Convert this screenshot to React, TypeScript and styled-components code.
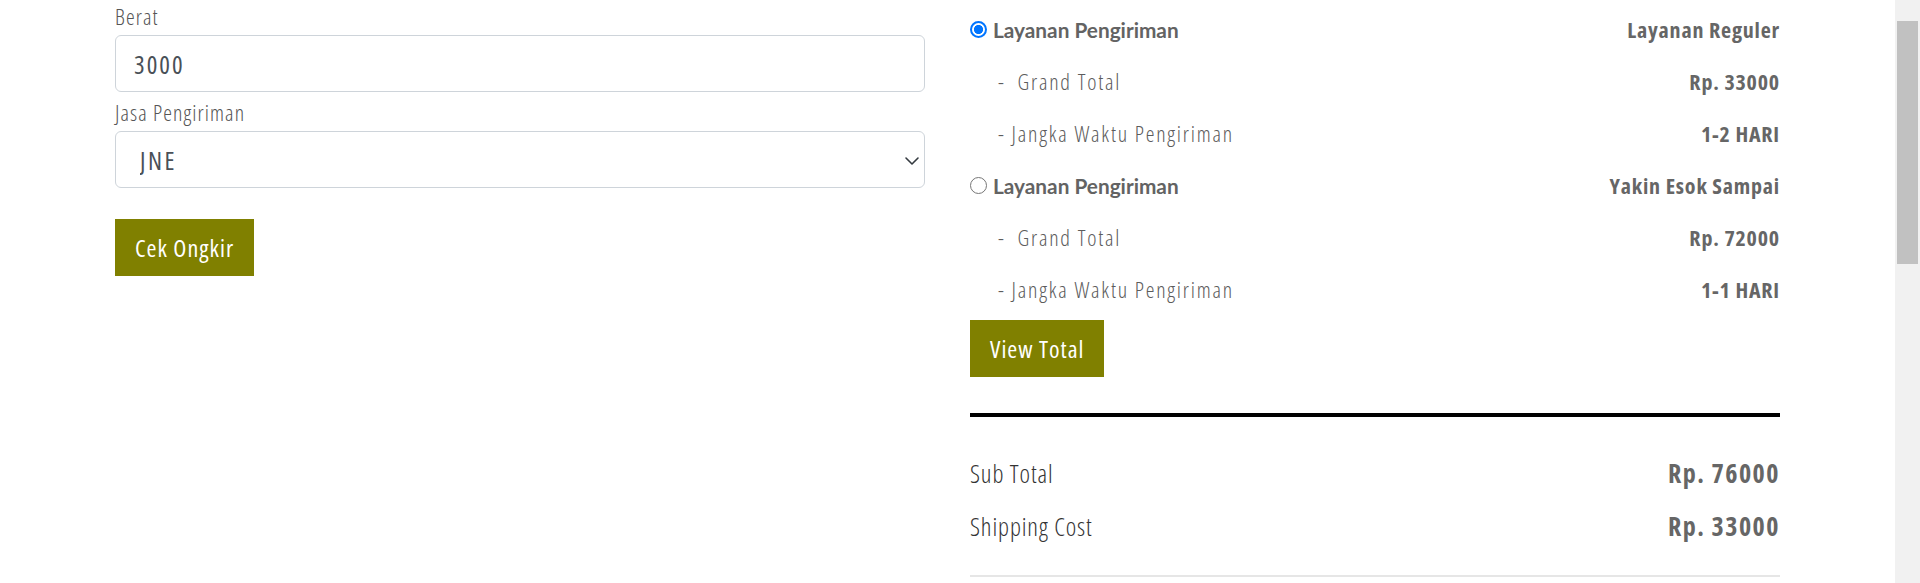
import React, { useState } from 'react';
import styled, { createGlobalStyle } from 'styled-components';

const GlobalStyle = createGlobalStyle`
  html, body {
    margin: 0;
    padding: 0;
    background: #ffffff;
    overflow: hidden;
  }
  * {
    box-sizing: border-box;
  }
`;

interface serviceItem {
  id: string;
  name: string;
  total: string;
  eta: string;
}

const services: Array<serviceItem> = [
  { id: 'reg', name: 'Layanan Reguler', total: 'Rp. 33000', eta: '1-2 HARI' },
  { id: 'yes', name: 'Yakin Esok Sampai', total: 'Rp. 72000', eta: '1-1 HARI' },
];

const summary = [
  { label: 'Sub Total', value: 'Rp. 76000' },
  { label: 'Shipping Cost', value: 'Rp. 33000' },
];

export default function App() {
  const [selected, setSelected] = useState('reg');
  const [weight, setWeight] = useState('3000');

  return (
    <Page>
      <GlobalStyle />
      <Content>
        <FormColumn>
          <FieldLabel htmlFor="berat">Berat</FieldLabel>
          <TextInput
            id="berat"
            value={weight}
            onChange={(e) => setWeight(e.target.value)}
          />
          <FieldLabel htmlFor="kurir">Jasa Pengiriman</FieldLabel>
          <SelectWrap>
            <Select id="kurir" defaultValue="jne">
              <option value="jne">JNE</option>
              <option value="pos">POS</option>
              <option value="tiki">TIKI</option>
            </Select>
            <Chevron viewBox="0 0 16 16" aria-hidden="true">
              <path
                d="M2 5l6 6 6-6"
                fill="none"
                stroke="#343a40"
                strokeWidth="1.6"
                strokeLinecap="round"
                strokeLinejoin="round"
              />
            </Chevron>
          </SelectWrap>
          <OliveButton $top={31}>Cek Ongkir</OliveButton>
        </FormColumn>

        <SummaryColumn>
          {services.map((s) => (
            <div key={s.id}>
              <Row>
                <ServiceHead onClick={() => setSelected(s.id)}>
                  <Radio $checked={selected === s.id} />
                  <ServiceTitle>Layanan Pengiriman</ServiceTitle>
                </ServiceHead>
                <Value>{s.name}</Value>
              </Row>
              <Row>
                <SubLabel>-{'\u00a0\u00a0'}Grand Total</SubLabel>
                <Value>{s.total}</Value>
              </Row>
              <Row>
                <SubLabel>- Jangka Waktu Pengiriman</SubLabel>
                <Value>{s.eta}</Value>
              </Row>
            </div>
          ))}
          <OliveButton $top={5}>View Total</OliveButton>
          <ThickRule />
          <SummaryList>
            {summary.map((item) => (
              <SummaryRow key={item.label}>
                <SummaryLabel>{item.label}</SummaryLabel>
                <SummaryValue>{item.value}</SummaryValue>
              </SummaryRow>
            ))}
          </SummaryList>
          <ThinRule />
        </SummaryColumn>
      </Content>

      <ScrollTrack>
        <ScrollThumb />
      </ScrollTrack>
    </Page>
  );
}

const Page = styled.div`
  width: 1920px;
  height: 583px;
  background: #ffffff;
`;

const Content = styled.div`
  display: grid;
  grid-template-columns: 810px 810px;
  column-gap: 45px;
  padding-left: 115px;
`;

const FormColumn = styled.div`
  display: flex;
  flex-direction: column;
  align-items: flex-start;
  padding-top: 1px;
`;

const FieldLabel = styled.label`
  display: block;
  font-family: 'Open Sans', sans-serif;
  font-stretch: 87.5%;
  font-weight: 300;
  font-size: 22px;
  letter-spacing: 1.1px;
  line-height: 30px;
  color: #555555;
  margin-bottom: 4px;
`;

const TextInput = styled.input`
  width: 100%;
  height: 57px;
  margin: 0 0 5px;
  padding: 0 18px;
  border: 1px solid #ced4da;
  border-radius: 6px;
  background: #ffffff;
  font-family: 'Open Sans', sans-serif;
  font-stretch: 87.5%;
  font-weight: 400;
  font-size: 25px;
  letter-spacing: 2px;
  color: #495057;
  outline: none;
`;

const SelectWrap = styled.div`
  position: relative;
  width: 100%;
`;

const Select = styled.select`
  display: block;
  width: 100%;
  height: 57px;
  padding: 0 40px 0 24px;
  border: 1px solid #ced4da;
  border-radius: 6px;
  background: #ffffff;
  appearance: none;
  font-family: 'Open Sans', sans-serif;
  font-stretch: 87.5%;
  font-weight: 400;
  font-size: 25px;
  letter-spacing: 2.5px;
  color: #495057;
  outline: none;
`;

const Chevron = styled.svg`
  position: absolute;
  right: 5px;
  top: 22px;
  width: 16px;
  height: 16px;
  pointer-events: none;
`;

const OliveButton = styled.button<{ $top: number }>`
  margin-top: ${(p) => p.$top}px;
  height: 57px;
  padding: 0 20px;
  border: none;
  border-radius: 0;
  background: #808000;
  color: #ffffff;
  font-family: 'Open Sans', sans-serif;
  font-stretch: 87.5%;
  font-weight: 400;
  font-size: 24px;
  letter-spacing: 1px;
  cursor: pointer;
`;

const SummaryColumn = styled.div`
  display: flex;
  flex-direction: column;
  align-items: flex-start;
  padding-top: 3px;

  & > div {
    width: 100%;
  }
`;

const Row = styled.div`
  display: flex;
  align-items: center;
  justify-content: space-between;
  width: 100%;
  height: 52px;
`;

const ServiceHead = styled.div`
  display: flex;
  align-items: center;
  gap: 6px;
  cursor: pointer;
`;

const Radio = styled.span<{ $checked: boolean }>`
  display: inline-block;
  width: 17px;
  height: 17px;
  border-radius: 50%;
  border: ${(p) => (p.$checked ? '2px solid #0075ff' : '1.5px solid #767676')};
  background: ${(p) =>
    p.$checked
      ? 'radial-gradient(circle, #0075ff 0 4.3px, #ffffff 4.8px)'
      : '#ffffff'};
`;

const ServiceTitle = styled.span`
  font-family: 'Lato', sans-serif;
  font-weight: 700;
  font-size: 20.8px;
  color: #636363;
`;

const Value = styled.span`
  font-family: 'Open Sans', sans-serif;
  font-stretch: 75%;
  font-weight: 700;
  font-size: 22px;
  letter-spacing: 0.8px;
  color: #666666;
`;

const SubLabel = styled.span`
  padding-left: 28px;
  font-family: 'Open Sans', sans-serif;
  font-stretch: 87.5%;
  font-weight: 300;
  font-size: 22px;
  letter-spacing: 1.8px;
  color: #5c5c5c;
  white-space: pre;
`;

const ThickRule = styled.hr`
  width: 100%;
  height: 4px;
  margin: 36px 0 0;
  border: none;
  background: #000000;
`;

const SummaryList = styled.div`
  width: 100%;
  padding-top: 29px;
`;

const SummaryRow = styled(Row)`
  height: 53px;
`;

const SummaryLabel = styled.span`
  font-family: 'Open Sans', sans-serif;
  font-stretch: 87.5%;
  font-weight: 300;
  font-size: 25px;
  letter-spacing: 0.9px;
  color: #333333;
`;

const SummaryValue = styled(Value)`
  font-size: 26px;
  letter-spacing: 1.5px;
`;

const ThinRule = styled.hr`
  width: 100%;
  height: 2px;
  margin: 23px 0 0;
  border: none;
  background: #e6e6e6;
`;

const ScrollTrack = styled.div`
  position: fixed;
  top: 0;
  right: 0;
  width: 25px;
  height: 100vh;
  background: #f1f1f1;
`;

const ScrollThumb = styled.div`
  margin: 21px 0 0 2px;
  width: 21px;
  height: 243px;
  background: #c1c1c1;
`;
